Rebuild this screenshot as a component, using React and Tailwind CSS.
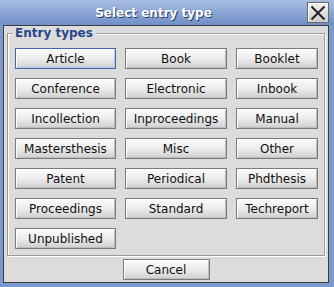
import React from 'react';

const entryTypes = [
    'Article', 'Book', 'Booklet',
    'Conference', 'Electronic', 'Inbook',
    'Incollection', 'Inproceedings', 'Manual',
    'Mastersthesis', 'Misc', 'Other',
    'Patent', 'Periodical', 'Phdthesis',
    'Proceedings', 'Standard', 'Techreport',
    'Unpublished',
];

const btnBase =
    'h-[21px] flex items-center justify-center text-[12px] leading-none text-[#111] bg-gradient-to-b from-[#fbfbfb] via-[#ececec] to-[#cfcfcf]';

const TypeButton = ({ label, focused }) => (
    <button
        className={
            focused
                ? `${btnBase} border border-[#4467a8] shadow-[inset_1px_1px_0_#ffffff,inset_-1px_-1px_0_#b8c6e0]`
                : `${btnBase} border border-[#7a7a7a] shadow-[inset_1px_1px_0_#ffffff,inset_-1px_-1px_0_#bdbdbd]`
        }
    >
        {label}
    </button>
);

const App = () => {
    return (
        <div
            className="w-[334px] h-[287px] flex flex-col bg-[#7b99cd] overflow-hidden"
            style={{ fontFamily: '"DejaVu Sans", Verdana, sans-serif' }}
        >
            {/* title bar */}
            <div className="h-[25px] flex items-center bg-gradient-to-b from-[#a8bde2] to-[#6f8fc7]">
                <div className="flex-1 text-center text-white font-bold text-[12px] [text-shadow:1px_1px_0_#2b3d63]">
                    Select entry type
                </div>
                <button className="mr-[5px] w-[22px] h-[21px] flex items-center justify-center border border-[#6a6a6a] bg-gradient-to-b from-[#f2f2f2] to-[#cdcdcd] shadow-[inset_1px_1px_0_#ffffff]">
                    <svg width="16" height="16" viewBox="0 0 16 16">
                        <path d="M1.5 1.5L14.5 14.5M14.5 1.5L1.5 14.5" stroke="#222" strokeWidth="2" fill="none" />
                    </svg>
                </button>
            </div>

            {/* body */}
            <div className="flex-1 ml-[3px] mr-[5px] mb-[4px] border border-[#3d3d3d] bg-[#dcdcdc] flex flex-col">
                <fieldset className="mx-[3px] border border-[#9a9a9a] shadow-[1px_1px_0_#ffffff,inset_1px_1px_0_#ffffff] pl-[7px] pt-[8px] pb-[6px]">
                    <legend className="-ml-[3px] px-[3px] bg-[#dcdcdc] text-[12px] font-bold leading-[14px] text-[#27468a]">
                        Entry types
                    </legend>
                    <div className="grid grid-cols-[101px_102px_82px] gap-x-[9px] gap-y-[9px]">
                        {entryTypes.map((t, i) => (
                            <TypeButton key={t} label={t} focused={i === 0} />
                        ))}
                    </div>
                </fieldset>
                <div className="flex justify-center mt-[3px]">
                    <button className="w-[87px] h-[21px] flex items-center justify-center text-[12px] text-[#111] border border-[#7a7a7a] bg-gradient-to-b from-[#fbfbfb] via-[#ececec] to-[#cfcfcf] shadow-[inset_1px_1px_0_#ffffff,inset_-1px_-1px_0_#bdbdbd]">
                        Cancel
                    </button>
                </div>
            </div>
        </div>
    );
};

export default App;
